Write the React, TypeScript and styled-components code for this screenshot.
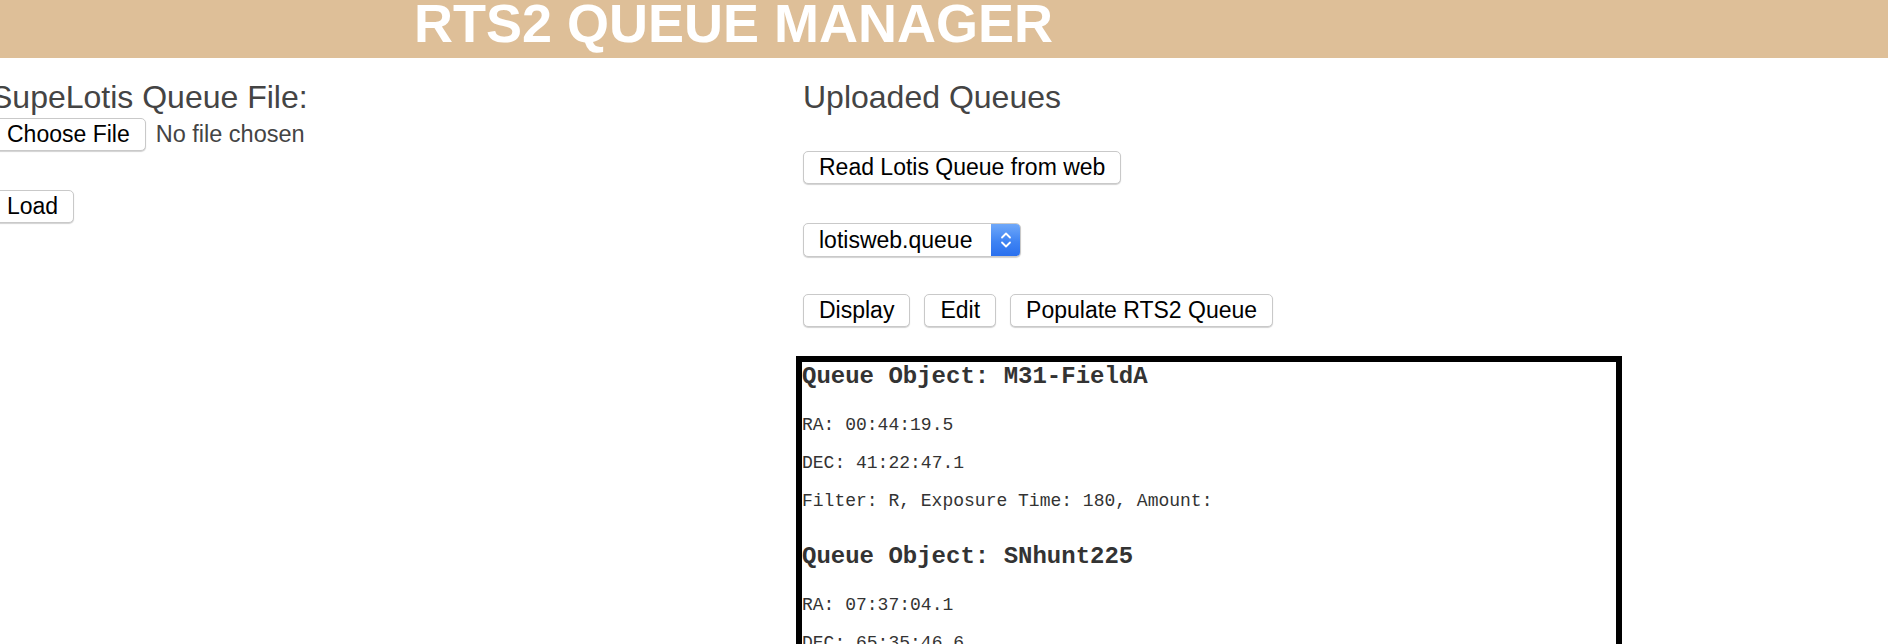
import * as React from "react"
import styled, { createGlobalStyle } from "styled-components"

const GlobalStyle = createGlobalStyle`
  html, body {
    margin: 0;
    padding: 0;
    background: #fff;
    overflow: hidden;
  }
  body {
    font-family: "Liberation Sans", Arial, sans-serif;
  }
`

const Header = styled.header`
  height: 58px;
  background: #debf98;
  padding-left: 414px;
  overflow: visible;
`

const Title = styled.h1`
  margin: 0;
  font-size: 54px;
  line-height: 47px;
  font-weight: 700;
  color: #fff;
  white-space: nowrap;
`

const Main = styled.main`
  display: grid;
  grid-template-columns: 812px 1fr;
  margin-left: -9px;
  padding-top: 21px;
`

const Column = styled.section`
  display: flex;
  flex-direction: column;
  align-items: flex-start;
`

const SectionLabel = styled.h2`
  margin: 0;
  font-size: 32px;
  line-height: 36px;
  font-weight: 400;
  color: #444;
  white-space: nowrap;
`

const Row = styled.div<{ $top: number; $gap?: number }>`
  display: flex;
  align-items: center;
  gap: ${(p) => p.$gap ?? 14}px;
  margin-top: ${(p) => p.$top}px;
`

const Button = styled.button`
  height: 33px;
  padding: 0 15px;
  background: #fff;
  border: 1px solid #c9c9c9;
  border-radius: 5px;
  box-shadow: 0 1px 1px rgba(0, 0, 0, 0.18);
  font-family: "Liberation Sans", Arial, sans-serif;
  font-size: 23px;
  color: #000;
  white-space: nowrap;
  cursor: pointer;
`

const FileStatus = styled.span`
  font-size: 23.5px;
  color: #444;
`

const SelectWrap = styled.div`
  display: flex;
  width: 218px;
  height: 34px;
  box-sizing: border-box;
  border: 1px solid #c9c9c9;
  border-radius: 5px;
  box-shadow: 0 1px 1px rgba(0, 0, 0, 0.18);
  background: #fff;
  overflow: hidden;
`

const NativeSelect = styled.select`
  flex: 1;
  appearance: none;
  border: none;
  background: transparent;
  padding: 0 0 0 15px;
  font-family: "Liberation Sans", Arial, sans-serif;
  font-size: 23px;
  color: #000;
  outline: none;
`

const Stepper = styled.div`
  width: 29px;
  display: flex;
  align-items: center;
  justify-content: center;
  background: linear-gradient(180deg, #6fa8f9 0%, #3f84f3 55%, #2a70ee 100%);
`

const QueueBox = styled.div`
  margin-top: 29px;
  margin-left: -7px;
  width: 826px;
  box-sizing: border-box;
  border: 6px solid #000;
  font-family: "Liberation Mono", "Courier New", monospace;
  color: #333;
`

const QueueObject = styled.div`
  margin-bottom: 22px;
`

const ObjectTitle = styled.h3`
  margin: 0 0 14px;
  font-size: 24px;
  line-height: 30px;
  font-weight: 700;
`

const ObjectLine = styled.p`
  margin: 0;
  font-size: 18px;
  line-height: 38px;
`

const queue = [
  {
    name: "M31-FieldA",
    ra: "00:44:19.5",
    dec: "41:22:47.1",
    filter: "Filter: R, Exposure Time: 180, Amount:",
  },
  {
    name: "SNhunt225",
    ra: "07:37:04.1",
    dec: "65:35:46.6",
    filter: "Filter: R, Exposure Time: 180, Amount:",
  },
]

const Chevrons = () => (
  <svg width="12" height="20" viewBox="0 0 12 20" fill="none">
    <path d="M2 7.5 L6 3.5 L10 7.5" stroke="#fff" strokeWidth="1.8" strokeLinecap="round" strokeLinejoin="round" />
    <path d="M2 12.5 L6 16.5 L10 12.5" stroke="#fff" strokeWidth="1.8" strokeLinecap="round" strokeLinejoin="round" />
  </svg>
)

export default function App() {
  return (
    <>
      <GlobalStyle />
      <Header>
        <Title>RTS2 QUEUE MANAGER</Title>
      </Header>
      <Main>
        <Column>
          <SectionLabel>SupeLotis Queue File:</SectionLabel>
          <Row $top={3} $gap={10}>
            <Button>Choose File</Button>
            <FileStatus>No file chosen</FileStatus>
          </Row>
          <Row $top={39}>
            <Button>Load</Button>
          </Row>
        </Column>
        <Column>
          <SectionLabel>Uploaded Queues</SectionLabel>
          <Row $top={36}>
            <Button>Read Lotis Queue from web</Button>
          </Row>
          <Row $top={39}>
            <SelectWrap>
              <NativeSelect defaultValue="lotisweb.queue">
                <option>lotisweb.queue</option>
              </NativeSelect>
              <Stepper>
                <Chevrons />
              </Stepper>
            </SelectWrap>
          </Row>
          <Row $top={37}>
            <Button>Display</Button>
            <Button>Edit</Button>
            <Button>Populate RTS2 Queue</Button>
          </Row>
          <QueueBox>
            {queue.map((q) => (
              <QueueObject key={q.name}>
                <ObjectTitle>Queue Object: {q.name}</ObjectTitle>
                <ObjectLine>RA: {q.ra}</ObjectLine>
                <ObjectLine>DEC: {q.dec}</ObjectLine>
                <ObjectLine>{q.filter}</ObjectLine>
              </QueueObject>
            ))}
          </QueueBox>
        </Column>
      </Main>
    </>
  )
}
